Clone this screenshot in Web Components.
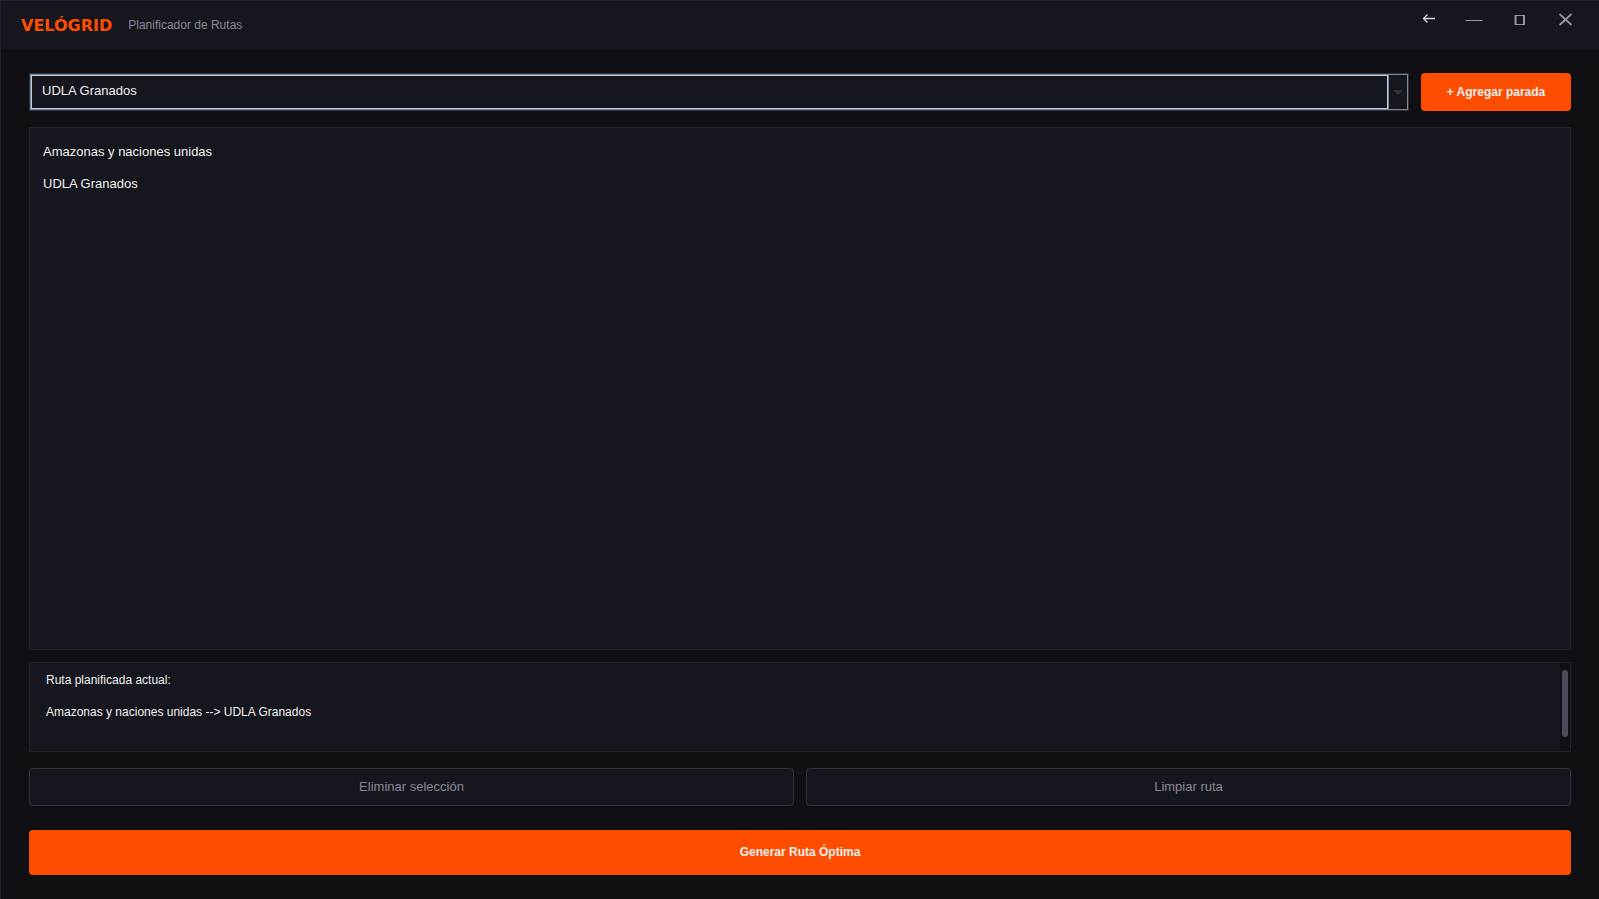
<!DOCTYPE html>
<html lang="es">
<head>
<meta charset="utf-8">
<title>VELÓGRID – Planificador de Rutas</title>
<style>
html, body { margin: 0; height: 100%; background: #101014; }
body { font-family: "Liberation Sans", Arial, sans-serif; color: #f0f0f0; }
</style>
</head>
<body>
<velo-window>
  <velo-titlebar slot="header" brand="VELÓGRID">Planificador de Rutas</velo-titlebar>
  <velo-picker></velo-picker>
  <velo-stops></velo-stops>
  <velo-summary></velo-summary>
  <velo-actions>
    <velo-button kind="ghost">Eliminar selección</velo-button>
    <velo-button kind="ghost">Limpiar ruta</velo-button>
  </velo-actions>
  <velo-button kind="hero">Generar Ruta Óptima</velo-button>
</velo-window>
<script>
const define = (name, html, setup) => customElements.define(name, class extends HTMLElement {
  constructor() {
    super();
    this.attachShadow({ mode: "open" }).innerHTML = html;
  }
  connectedCallback() { if (setup) setup(this); }
});

define("velo-window", `
<style>
:host { display: flex; flex-direction: column; box-sizing: border-box; min-height: 100vh; border: solid #22222e; border-width: 1px 0 0 1px; background: #101014; }
main { flex: 1; display: flex; flex-direction: column; padding: 24px 28px; }
::slotted(velo-picker) { margin-bottom: 16px; }
::slotted(velo-stops) { flex: 1; margin-bottom: 12px; }
::slotted(velo-summary) { margin-bottom: 16px; }
::slotted(velo-actions) { margin-bottom: 24px; }
</style>
<slot name="header"></slot>
<main><slot></slot></main>`);

define("velo-titlebar", `
<style>
:host { display: flex; justify-content: space-between; align-items: center; height: 48px; padding: 0 10px 0 20px; background: #16161e; }
.title { display: flex; align-items: center; gap: 16px; }
h1 { margin: 0; padding-top: 2px; font: bold 16px/20px "DejaVu Sans", sans-serif; color: #ff4d00; }
p { margin: 0; font-size: 12px; line-height: 16px; color: #888896; }
nav { display: flex; align-self: flex-start; }
button { width: 46px; height: 36px; display: grid; place-items: center; padding: 0; border: 0; background: none; color: #9696a4; }
svg { display: block; width: 16px; height: 16px; fill: none; stroke: currentColor; overflow: visible; }
.back { color: #d8d8dc; }
</style>
<div class="title"><h1></h1><p><slot></slot></p></div>
<nav aria-label="Ventana">
<button class="back" aria-label="Volver"><svg viewBox="0 0 16 16"><path d="M3.500 7.500H15M7.500 3.500L3.500 7.500L7.500 11.500" stroke-width="1.300"/></svg></button>
<button aria-label="Minimizar"><svg viewBox="0 0 16 16"><path d="M-.5 9.500H16.500"/></svg></button>
<button aria-label="Maximizar"><svg viewBox="0 0 16 16"><path d="M3 4.500H12.500M3 13.500H12.500"/><path d="M3.500 4V14M12 4V14" stroke-width="2"/></svg></button>
<button aria-label="Cerrar"><svg viewBox="0 0 16 16"><path d="M1.500 3L13.500 14M13.500 3L1.500 14" stroke-width="1.700"/></svg></button>
</nav>`, el => { el.shadowRoot.querySelector("h1").textContent = el.getAttribute("brand"); });

define("velo-picker", `
<style>
:host { display: flex; gap: 12px; height: 38px; }
.combo { flex: 1; display: grid; grid-template-columns: minmax(0, 1fr) 19px; box-sizing: border-box; border: 1px solid #323240; background: #7a8a99; padding: 1px; }
select { appearance: none; min-width: 0; border: 1px solid #b8cfe5; border-radius: 0; outline: 0; margin: 0; padding: 0 10px 4px; background: #16161e; color: #f0f0f0; font: 13px "Liberation Sans", Arial, sans-serif; }
.arrow { display: grid; place-items: center; margin-left: 1px; background: #16161e; }
svg { display: block; }
velo-button { width: 150px; }
</style>
<div class="combo">
<select aria-label="Parada"><option>UDLA Granados</option><option>Amazonas y naciones unidas</option></select>
<span class="arrow"><svg width="10" height="5" viewBox="0 0 10 5"><path d="M0 0H10L5 5Z" fill="#333"/></svg></span>
</div>
<velo-button kind="primary">+ Agregar parada</velo-button>`);

define("velo-button", `
<style>
:host { display: block; height: 38px; }
:host([kind="hero"]) { height: 45px; }
button { display: block; box-sizing: border-box; width: 100%; height: 100%; margin: 0; padding: 0; border: 0; border-radius: 4px; background: #ff4d00; color: #f0f0f0; font: bold 12px/16px "Liberation Sans", Arial, sans-serif; }
:host([kind="hero"]) button { padding-bottom: 2px; }
:host([kind="ghost"]) button { border: 1px solid #323240; background: #16161e; color: #888896; font-weight: normal; font-size: 13px; }
</style>
<button type="button"><slot></slot></button>`);

define("velo-stops", `
<style>
:host { display: block; box-sizing: border-box; border: 1px solid #22222e; background: #16161e; padding: 8px 13px; }
ul { margin: 0; padding: 0; list-style: none; font-size: 13px; line-height: 32px; }
</style>
<ul><li>Amazonas y naciones unidas</li><li>UDLA Granados</li></ul>`);

define("velo-summary", `
<style>
:host { display: flex; justify-content: space-between; box-sizing: border-box; height: 90px; border: 1px solid #22222e; background: #16161e; }
.text { padding: 9px 16px 0; font-size: 12px; line-height: 16px; }
p { margin: 0 0 16px; }
.track { flex: none; width: 6px; padding: 7px 2px 15px; background: #101014; }
.thumb { height: 67px; border-radius: 3px; background: #4a4a58; }
</style>
<div class="text"><p>Ruta planificada actual:</p><p>Amazonas y naciones unidas --&gt; UDLA Granados</p></div>
<div class="track"><div class="thumb"></div></div>`);

define("velo-actions", `
<style>
:host { display: grid; grid-template-columns: 1fr 1fr; gap: 12px; }
</style>
<slot></slot>`);
</script>
</body>
</html>
